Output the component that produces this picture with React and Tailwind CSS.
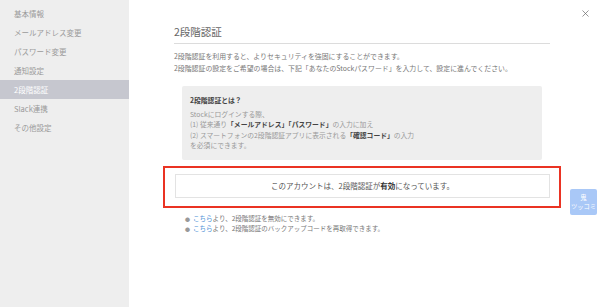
import { X } from 'lucide-react'

const MENU = ['基本情報', 'メールアドレス変更', 'パスワード変更', '通知設定', '2段階認証', 'Slack連携', 'その他設定']
const ACTIVE = '2段階認証'

const FONT = { fontFamily: '"Noto Sans CJK JP", "Noto Sans", sans-serif' }

const App = () => {
  return (
    <div className="flex h-[307px] w-[600px] overflow-hidden bg-white text-[#555]" style={FONT}>
      <aside className="w-[129px] shrink-0 bg-[#eeeeee] pt-[4px]">
        {MENU.map((item) => (
          <div
            key={item}
            className={`flex h-[19px] items-center pl-[14px] text-[7.5px] ${
              item === ACTIVE ? 'bg-[#c6c7cf] text-white' : 'text-[#9a9a9a]'
            }`}
          >
            {item}
          </div>
        ))}
      </aside>

      <main className="relative flex-1">
        <button type="button" aria-label="閉じる" className="absolute top-[8px] right-[9px] text-[#666]">
          <X className="h-[11px] w-[11px]" strokeWidth={1.5} />
        </button>

        <div className="ml-[45px] w-[376px] pt-[25px]">
          <h1 className="border-b border-[#dcdcdc] pb-[4px] text-[10.5px] leading-[14px] text-[#666]">2段階認証</h1>
          <p className="mt-[6px] text-[6.9px] leading-[12px] text-[#777]">
            2段階認証を利用すると、よりセキュリティを強固にすることができます。
            <br />
            2段階認証の設定をご希望の場合は、下記「あなたのStockパスワード」を入力して、設定に進んでください。
          </p>

          <div className="mx-[8px] mt-[12px] h-[74px] rounded-[2px] bg-[#eeeeee] px-[8px] pt-[9px] text-[6.8px] leading-[10.5px] text-[#999]">
            <p className="mb-[3px] font-bold text-[#444]">2段階認証とは？</p>
            <p>Stockにログインする際、</p>
            <p>
              (1) 従来通り<span className="font-bold text-[#444]">「メールアドレス」「パスワード」</span>の入力に加え
            </p>
            <p>
              (2) スマートフォンの2段階認証アプリに表示される<span className="font-bold text-[#444]">「確認コード」</span>の入力
            </p>
            <p>を必須にできます。</p>
          </div>

          <div className="-mx-[11px] mt-[6px] border-2 border-[#ea3323] pt-[6px] pr-[9px] pb-[8px] pl-[10px]">
            <div className="flex h-[24px] items-center justify-center border border-[#e3e3e3] bg-white text-[7.5px] text-[#555]">
              このアカウントは、2段階認証が<span className="font-bold text-[#333]">有効</span>になっています。
            </div>
          </div>

          <ul className="mt-[6px] ml-[11px] text-[6.5px] leading-[9.5px] text-[#777]">
            <li className="flex items-center gap-[3px]">
              <span className="text-[5px] text-[#999]">●</span>
              <span>
                <span className="text-[#4a8fd6]">こちら</span>より、2段階認証を無効にできます。
              </span>
            </li>
            <li className="flex items-center gap-[3px]">
              <span className="text-[5px] text-[#999]">●</span>
              <span>
                <span className="text-[#4a8fd6]">こちら</span>より、2段階認証のバックアップコードを再取得できます。
              </span>
            </li>
          </ul>
        </div>

        <div className="absolute top-[189px] left-[441px] flex h-[26px] w-[27px] flex-col items-center justify-center rounded-[2px] bg-[#a9c8f7] text-[6.3px] leading-[9px] text-white">
          <span>鬼</span>
          <span>ツッコミ</span>
        </div>
      </main>
    </div>
  )
}

export default App
